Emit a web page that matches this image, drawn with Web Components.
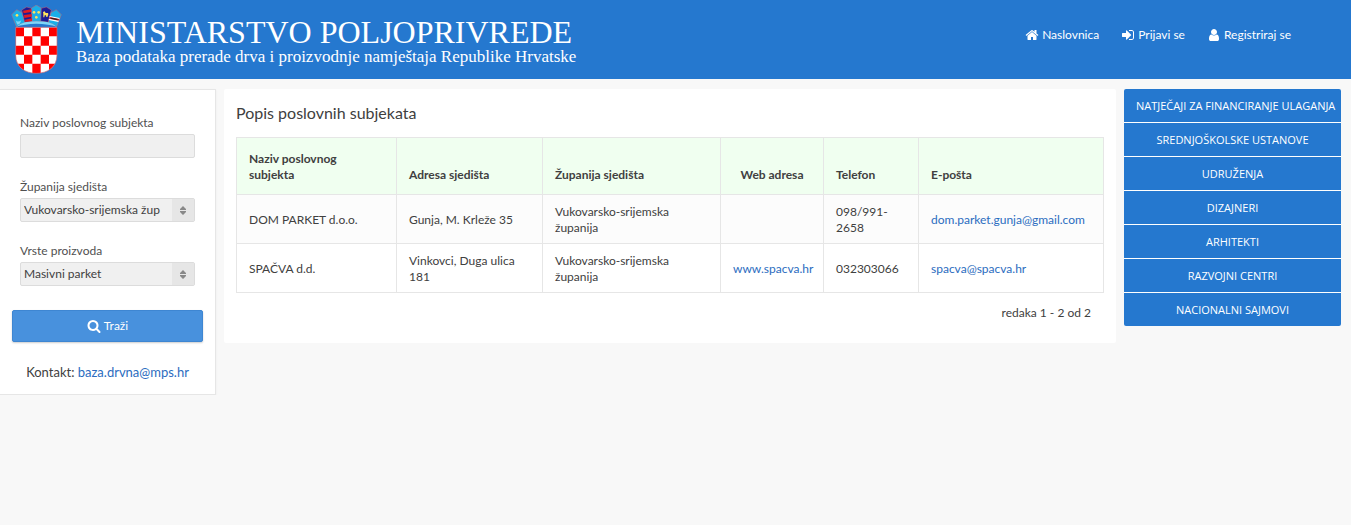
<!DOCTYPE html>
<html lang="hr">
<head>
<meta charset="utf-8">
<title>Popis poslovnih subjekata</title>
<style>
  body {
    margin: 0;
    background: #f8f8f8;
    color: #404040;
    font: 12px/16px Lato, "Open Sans", sans-serif;
    --brand: #2578cf;
    --link: #2b6cc0;
    --line: #e6e6e6;
  }
</style>
</head>
<body>
<drva-page>
  <site-header slot="header">
    <nav-link icon="home">Naslovnica</nav-link>
    <nav-link icon="login">Prijavi se</nav-link>
    <nav-link icon="user">Registriraj se</nav-link>
  </site-header>
  <search-panel slot="search"></search-panel>
  <subject-list slot="content"></subject-list>
  <side-menu slot="menu">
    <menu-link>NATJEČAJI ZA FINANCIRANJE ULAGANJA</menu-link>
    <menu-link>SREDNJOŠKOLSKE USTANOVE</menu-link>
    <menu-link>UDRUŽENJA</menu-link>
    <menu-link>DIZAJNERI</menu-link>
    <menu-link>ARHITEKTI</menu-link>
    <menu-link>RAZVOJNI CENTRI</menu-link>
    <menu-link>NACIONALNI SAJMOVI</menu-link>
  </side-menu>
</drva-page>

<script>
const define = (name, html, setup) => {
  const template = document.createElement('template');
  template.innerHTML = html;
  customElements.define(name, class extends HTMLElement {
    static observedAttributes = ['name', 'icon'];
    constructor() {
      super();
      this.attachShadow({ mode: 'open' }).append(template.content.cloneNode(true));
    }
    attributeChangedCallback() { if (setup) setup(this, this.shadowRoot); }
  });
};

const ICONS = {
  home: 'M1472 992v480q0 26-19 45t-45 19h-384v-384h-256v384h-384q-26 0-45-19t-19-45v-480q0-1 .5-3t.5-3l575-474 575 474q1 2 1 6zm223-69l-62 74q-8 9-21 11h-3q-13 0-21-7l-692-577-692 577q-12 8-24 7-13-2-21-11l-62-74q-8-10-7-23.5t11-21.5l719-599q32-26 76-26t76 26l244 204v-195q0-14 9-23t23-9h192q14 0 23 9t9 23v408l219 182q10 8 11 21.5t-7 23.5z',
  login: 'M1312 896q0 26-19 45l-544 544q-19 19-45 19t-45-19-19-45v-288h-448q-26 0-45-19t-19-45v-384q0-26 19-45t45-19h448v-288q0-26 19-45t45-19 45 19l544 544q19 19 19 45zm352-352v704q0 119-84.5 203.5t-203.5 84.5h-320q-13 0-22.5-9.5t-9.5-22.5q0-4-1-20t-.5-26.5 3-23.5 10-19.5 20.5-6.5h320q66 0 113-47t47-113v-704q0-66-47-113t-113-47h-312l-11.5-1-11.5-3-8-5.5-7-9-2-13.5q0-4-1-20t-.5-26.5 3-23.5 10-19.5 20.5-6.5h320q119 0 203.5 84.5t84.5 203.5z',
  user: 'M1536 1399q0 109-62.5 187t-150.5 78h-854q-88 0-150.5-78t-62.5-187q0-85 8.5-160.5t31.5-152 58.5-131 94-89 134.5-34.5q131 128 313 128t313-128q76 0 134.5 34.5t94 89 58.5 131 31.5 152 8.5 160.5zm-256-887q0 159-112.5 271.5t-271.5 112.5-271.5-112.5-112.5-271.5 112.5-271.5 271.5-112.5 271.5 112.5 112.5 271.5z',
  search: 'M1216 832q0-185-131.5-316.5t-316.5-131.5-316.5 131.5-131.5 316.5 131.5 316.5 316.5 131.5 316.5-131.5 131.5-316.5zm512 832q0 52-38 90t-90 38q-54 0-90-38l-343-342q-179 124-399 124-143 0-273.5-55.5t-225-150-150-225-55.5-273.5 55.5-273.5 150-225 225-150 273.5-55.5 273.5 55.5 225 150 150 225 55.5 273.5q0 220-124 399l343 343q37 37 37 90z'
};

define('glyph-icon', `
  <style>
    :host { display: block; width: 14px; height: 14px; }
    svg { display: block; width: 100%; height: 100%; fill: currentColor; }
  </style>
  <svg viewBox="0 0 1792 1792" aria-hidden="true"><path/></svg>
`, (host, root) => root.querySelector('path').setAttribute('d', ICONS[host.getAttribute('name')]));

/* Croatian coat of arms: chequered shield under a crown of five small shields */
define('coat-of-arms', `
  <style>
    :host { display: block; width: 51px; height: 69px; flex: none; }
    svg { display: block; width: 100%; height: 100%; }
  </style>
  <svg viewBox="18 15 153 207" role="img" aria-label="Grb">
    <defs><clipPath id="shield"><path d="M32 82H156V165C156 201 128 220 94 220S32 201 32 165Z"/></clipPath></defs>
    <g stroke="#d2676e" stroke-width="1.5">
      <path fill="#1aaee8" d="M20 44L35 29L51 38L60 68Q45 71 34 80Z"/>
      <path fill="#1c1c96" d="M50 30L65 21L80 25L82 64Q70 64 59 67Z"/>
      <path fill="#1aaee8" d="M79 25L94 15L110 25L108 64H81Z"/>
      <path fill="#1c1c96" d="M109 25L124 21L139 30L130 67Q119 64 107 64Z"/>
      <path fill="#1aaee8" d="M138 38L154 29L169 44L155 80Q144 71 130 68Z"/>
    </g>
    <path fill="#7fd6f6" d="M34 80Q45 71 60 67Q94 60 130 67Q145 71 155 80Q144 76 128 74Q94 69 60 74Q44 76 34 80Z"/>
    <path fill="#e31b23" d="M54 32L79 28V36L56 40ZM57 45L80 42V50L58 54ZM60 59L81 55V63L61 66Z"/>
    <path fill="#7fd6f6" d="M32 60Q37 69 49 61Q44 76 36 73Z"/>
    <g fill="#ffe45c">
      <circle cx="36" cy="46" r="4"/><circle cx="87" cy="37" r="4"/><circle cx="101" cy="37" r="4"/><circle cx="94" cy="52" r="4"/>
      <path d="M114 36L119 34L122 39H129L130 43L127 51H124L123 46H119L118 52H115V42Z"/>
    </g>
    <path fill="#fff" d="M134 48L164 54L160 66L131 60Z"/>
    <path fill="#b51c25" d="M134 51L163 57L161 62L132 56Z"/>
    <path fill="#24221f" d="M139 53L158 57L157 60L138 56Z"/>
    <g clip-path="url(#shield)">
      <path fill="#fff" d="M30 80H158V222H30Z"/>
      <path fill="#f00" d="M32 82h25v27h-25zM82 82h25v27h-25zM132 82h25v27h-25zM57 109h25v28h-25zM107 109h25v28h-25zM32 137h25v27h-25zM82 137h25v27h-25zM132 137h25v27h-25zM57 164h25v27h-25zM107 164h25v27h-25zM32 191h25v30h-25zM82 191h25v30h-25zM132 191h25v30h-25z"/>
    </g>
    <path fill="none" stroke="#d2676e" stroke-width="2" d="M32 82H156V165C156 201 128 220 94 220S32 201 32 165Z"/>
  </svg>
`);

define('nav-link', `
  <style>
    :host { display: block; }
    a { display: flex; align-items: center; gap: 3px; color: #fff; text-decoration: none; }
  </style>
  <a href="#"><glyph-icon></glyph-icon><span><slot></slot></span></a>
`, (host, root) => root.querySelector('glyph-icon').setAttribute('name', host.getAttribute('icon')));

define('site-header', `
  <style>
    :host {
      display: flex; align-items: flex-start; justify-content: space-between;
      box-sizing: border-box; min-height: 79px; padding: 5px 60px 5px 11px;
      background: var(--brand); color: #fff;
    }
    .brand { display: flex; gap: 14px; }
    .title { padding-top: 11px; font-family: "Liberation Serif", serif; white-space: nowrap; }
    h1 { margin: 0; font-size: 32px; line-height: 32px; font-weight: 400; }
    p { margin: 0; font-size: 17px; line-height: 18px; }
    nav { display: flex; gap: 22px; padding-top: 22px; }
  </style>
  <div class="brand">
    <coat-of-arms></coat-of-arms>
    <div class="title">
      <h1>MINISTARSTVO POLJOPRIVREDE</h1>
      <p>Baza podataka prerade drva i proizvodnje namještaja Republike Hrvatske</p>
    </div>
  </div>
  <nav><slot></slot></nav>
`);

define('search-panel', `
  <style>
    :host {
      display: block; padding: 25px 12px 14px; background: #fff;
      border: 1px solid var(--line); border-left: 0; box-shadow: 0 1px 2px rgba(0,0,0,.06);
    }
    form { display: grid; gap: 21px; }
    .field { display: grid; gap: 3px; padding: 0 8px; }
    label { color: #505050; }
    input, select {
      appearance: none; box-sizing: border-box; width: 100%; height: 24px; margin: 0;
      border: 1px solid #dcdcdc; border-radius: 2px; background: #f0f0f0;
      font: inherit; color: #404040; padding: 0 3px;
    }
    .pick { display: grid; position: relative; }
    select { padding-right: 26px; }
    .pick svg {
      position: absolute; right: 1px; top: 1px; width: 22px; height: 22px;
      background: #e6e6e6; pointer-events: none;
    }
    button {
      display: flex; align-items: center; justify-content: center; gap: 3px;
      height: 32px; margin: 3px 0 0; padding: 0; border: 1px solid #3e86d2; border-radius: 2px;
      background: #4891dd; color: #fff; font: inherit; box-shadow: 0 1px 2px rgba(0,0,0,.2);
    }
    p { margin: 22px 0 0; font-size: 13px; line-height: 16px; text-align: center; }
    a { color: var(--link); text-decoration: none; }
  </style>
  <form>
    <div class="field">
      <label for="name">Naziv poslovnog subjekta</label>
      <input id="name" type="text">
    </div>
    <div class="field">
      <label for="county">Županija sjedišta</label>
      <div class="pick">
        <select id="county"><option>Vukovarsko-srijemska žup</option></select>
        <svg viewBox="0 0 22 22" aria-hidden="true"><path fill="#888" d="M8 10L11 7L14 10V11H8ZM8 12H14V13L11 16L8 13Z"/></svg>
      </div>
    </div>
    <div class="field">
      <label for="product">Vrste proizvoda</label>
      <div class="pick">
        <select id="product"><option>Masivni parket</option></select>
        <svg viewBox="0 0 22 22" aria-hidden="true"><path fill="#888" d="M8 10L11 7L14 10V11H8ZM8 12H14V13L11 16L8 13Z"/></svg>
      </div>
    </div>
    <button type="button"><glyph-icon name="search"></glyph-icon><span>Traži</span></button>
  </form>
  <p>Kontakt: <a href="mailto:baza.drvna@mps.hr">baza.drvna@mps.hr</a></p>
`);

define('subject-list', `
  <style>
    :host { display: block; padding: 12px 12px 22px; background: #fff; border-radius: 2px; }
    h2 { margin: 0 0 12px; font-size: 16px; line-height: 24px; font-weight: 400; }
    table { width: 100%; table-layout: fixed; border-collapse: collapse; }
    .name { width: 160px; } .address { width: 146px; } .county { width: 178px; }
    .web { width: 103px; } .phone { width: 95px; }
    th, td { border: 1px solid var(--line); padding: 9px 12px 7px; text-align: left; vertical-align: middle; }
    th { padding: 13px 12px 11px; background: #f0fff0; vertical-align: bottom; font-weight: 700; }
    tbody tr:nth-child(odd) { background: #fcfcfc; }
    .center { text-align: center; }
    a { color: var(--link); text-decoration: none; }
    p { margin: 0; padding: 12px 13px 0; text-align: right; }
  </style>
  <h2>Popis poslovnih subjekata</h2>
  <table>
    <colgroup><col class="name"><col class="address"><col class="county"><col class="web"><col class="phone"><col></colgroup>
    <thead>
      <tr><th>Naziv poslovnog subjekta</th><th>Adresa sjedišta</th><th>Županija sjedišta</th><th class="center">Web adresa</th><th>Telefon</th><th>E-pošta</th></tr>
    </thead>
    <tbody>
      <tr>
        <td>DOM PARKET d.o.o.</td><td>Gunja, M. Krleže 35</td><td>Vukovarsko-srijemska županija</td><td></td>
        <td>098/991-2658</td><td><a href="mailto:dom.parket.gunja@gmail.com">dom.parket.gunja@gmail.com</a></td>
      </tr>
      <tr>
        <td>SPAČVA d.d.</td><td>Vinkovci, Duga ulica 181</td><td>Vukovarsko-srijemska županija</td>
        <td class="center"><a href="#">www.spacva.hr</a></td>
        <td>032303066</td><td><a href="mailto:spacva@spacva.hr">spacva@spacva.hr</a></td>
      </tr>
    </tbody>
  </table>
  <p>redaka 1 - 2 od 2</p>
`);

define('menu-link', `
  <style>
    :host { display: block; background: var(--brand); }
    a {
      display: block; padding: 9px 12px 8px; color: #fff; font: 11px/16px "Open Sans", sans-serif;
      text-align: center; text-decoration: none; white-space: nowrap;
    }
  </style>
  <a href="#"><slot></slot></a>
`);

define('side-menu', `
  <style>
    :host { display: block; }
    nav { display: grid; grid-template-columns: minmax(0, 1fr); gap: 1px; background: #fff; border-radius: 2px; overflow: hidden; }
  </style>
  <nav><slot></slot></nav>
`);

define('drva-page', `
  <style>
    :host { display: block; }
    main {
      display: grid; grid-template-columns: 216px minmax(0, 1fr) 217px; gap: 8px;
      align-items: start; padding: 10px 10px 0 0;
    }
  </style>
  <slot name="header"></slot>
  <main><slot name="search"></slot><slot name="content"></slot><slot name="menu"></slot></main>
`);
</script>
</body>
</html>
